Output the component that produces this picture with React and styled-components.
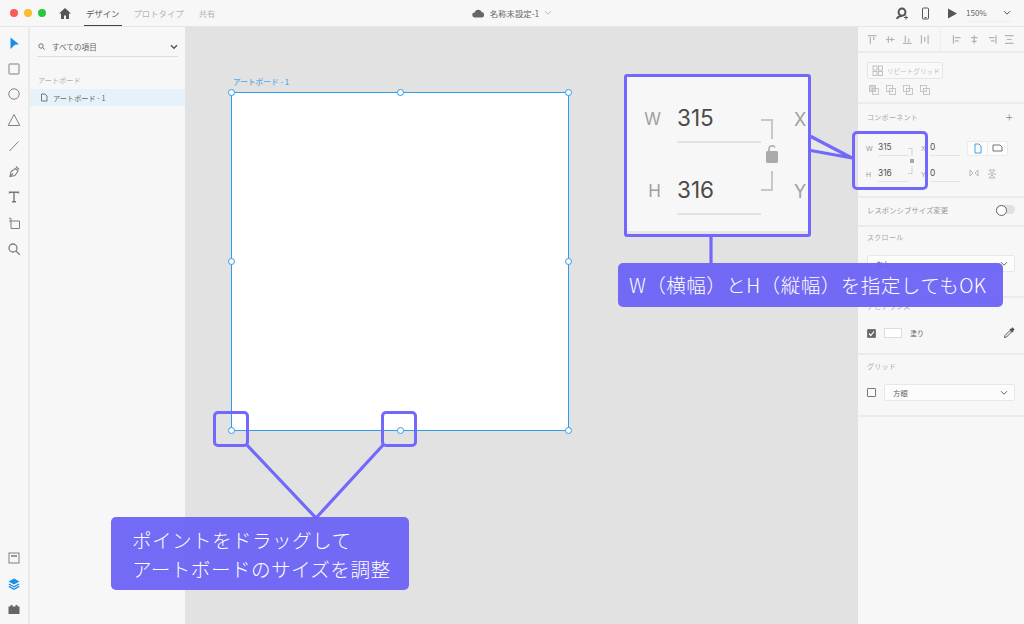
import React from "react";
import styled, { createGlobalStyle } from "styled-components";

const GlobalStyle = createGlobalStyle`
  html, body { margin: 0; padding: 0; }
  body { font-family: "Noto Sans CJK JP", "Noto Sans", sans-serif; color: #555; }
  * { box-sizing: border-box; }
`;

const Page = styled.div`
  position: relative;
  width: 1024px;
  height: 624px;
  overflow: hidden;
  display: flex;
  flex-direction: column;
  background: #f7f7f7;
`;

/* top bar */
const TopBar = styled.header`
  height: 27px;
  flex: none;
  display: grid;
  grid-template-columns: 1fr auto 1fr;
  align-items: center;
  background: #f7f7f7;
  border-bottom: 1px solid #e6e6e6;
`;
const BarLeft = styled.div`
  display: flex;
  align-items: center;
  height: 100%;
  padding-left: 10px;
`;
const Light = styled.span`
  width: 8px;
  height: 8px;
  border-radius: 50%;
  margin-right: 6px;
  background: ${(p) => p.$color};
`;
const HomeIcon = styled.svg`
  margin-left: 6px;
`;
const Tab = styled.span`
  height: 100%;
  display: flex;
  align-items: center;
  padding: 0 2px;
  margin-left: ${(p) => p.$gap}px;
  font-size: 8.4px;
  color: ${(p) => (p.$active ? "#555" : "#b5b5b5")};
  border-bottom: 1px solid ${(p) => (p.$active ? "#444" : "transparent")};
`;
const DocTitle = styled.div`
  display: flex;
  align-items: center;
  gap: 5px;
  font-size: 8.4px;
  color: #666;
`;
const BarRight = styled.div`
  display: flex;
  align-items: center;
  justify-content: flex-end;
  padding-right: 13px;
`;
const BarIcon = styled.svg`
  margin-left: ${(p) => p.$gap || 0}px;
`;
const Zoom = styled.span`
  display: flex;
  width: 45px;
  justify-content: space-between;
  align-items: center;
  margin-left: 9px;
  font-size: 8px;
  color: #666;
  height: 18px;
  border-bottom: 1px solid #eee;
`;

/* main */
const Body = styled.div`
  flex: 1;
  display: flex;
  min-height: 0;
`;
const ToolRail = styled.nav`
  width: 30px;
  flex: none;
  display: flex;
  flex-direction: column;
  align-items: center;
  justify-content: space-between;
  padding: 9px 0 8px;
  background: #f7f7f7;
  border-right: 2px solid #ebebeb;
`;
const ToolGroup = styled.div`
  display: flex;
  flex-direction: column;
  align-items: center;
  gap: ${(p) => p.$gap}px;
`;
const ToolSlot = styled.span`
  width: 16px;
  height: 14px;
  display: flex;
  align-items: center;
  justify-content: center;
`;
const LayersPanel = styled.aside`
  width: 155px;
  flex: none;
  background: #f7f7f7;
  display: flex;
  flex-direction: column;
`;
const SearchRow = styled.div`
  height: 19px;
  margin: 11px 7px 0;
  display: flex;
  align-items: center;
  gap: 7px;
  padding: 0 0 1px 1px;
  font-size: 7.6px;
  color: #666;
  border-bottom: 1px solid #dcdcdc;
`;
const SearchChevron = styled.span`
  margin-left: auto;
  display: flex;
`;
const GroupLabel = styled.div`
  margin: 17px 0 3px 8px;
  height: 12px;
  font-size: 7.2px;
  line-height: 12px;
  color: #b0b0b0;
`;
const LayerRow = styled.div`
  height: 17px;
  display: flex;
  align-items: center;
  gap: 5px;
  padding-left: 10px;
  background: #e5f2fa;
  font-size: 7.2px;
  color: #666;
`;
const Canvas = styled.main`
  position: relative;
  flex: 1;
  background: #e2e2e2;
`;
const ArtboardLabel = styled.div`
  position: absolute;
  left: 48px;
  top: 49px;
  font-size: 7.7px;
  line-height: 12px;
  font-weight: 500;
  color: #5da9e6;
`;
const Artboard = styled.div`
  position: absolute;
  left: 46px;
  top: 65px;
  width: 338px;
  height: 339px;
  background: #fff;
  border: 1px solid #2d9ceb;
`;
const Handle = styled.span`
  position: absolute;
  left: calc(${(p) => p.$x}% + ${(p) => p.$x / 100}px);
  top: calc(${(p) => p.$y}% + ${(p) => p.$y / 100}px);
  width: 7px;
  height: 7px;
  margin: -4px 0 0 -4px;
  border-radius: 50%;
  background: #fff;
  border: 1px solid #2d9ceb;
`;

/* right panel */
const Inspector = styled.aside`
  width: 166px;
  flex: none;
  background: #f7f7f7;
  display: flex;
  flex-direction: column;
`;
const Section = styled.section`
  height: ${(p) => p.$h}px;
  flex: none;
  padding: ${(p) => p.$pad || "0 9px"};
  border-bottom: 2px solid #ebebeb;
`;
const AlignRow = styled.div`
  height: 100%;
  display: flex;
  align-items: center;
  gap: 7px;
  padding-left: 0;
`;
const AlignDivider = styled.span`
  width: 1px;
  height: 100%;
  background: #eee;
  margin: 0 4px 0 3px;
`;
const RepeatButton = styled.div`
  width: 76px;
  height: 17px;
  display: flex;
  align-items: center;
  gap: 4px;
  padding-left: 4px;
  border: 1px solid #e6e6e6;
  border-radius: 2px;
  font-size: 6.6px;
  white-space: nowrap;
  color: #c0c0c0;
  background: #f9f9f9;
`;
const BoolRow = styled.div`
  display: flex;
  gap: 7px;
  margin: 6px 0 0 2px;
`;
const SectionTitle = styled.div`
  font-size: 7px;
  line-height: 10px;
  letter-spacing: 0.3px;
  color: #a8a8a8;
  display: flex;
  justify-content: space-between;
  align-items: center;
`;
const PlusMark = styled.span`
  font-size: 13px;
  line-height: 10px;
  font-weight: 300;
  color: #888;
  margin-right: 2px;
`;
const FieldGrid = styled.div`
  display: grid;
  grid-template-columns: 12px 30px 13px 9px 30px auto;
  grid-template-rows: 26px 26px;
  margin-top: 13px;
  margin-left: -1px;
  align-items: center;
`;
const FieldLabel = styled.span`
  font-size: 7px;
  color: #999;
  font-family: "Liberation Sans", sans-serif;
`;
const FieldValue = styled.span`
  height: 16px;
  font-size: 8.4px;
  line-height: 14px;
  color: #555;
  font-family: "Inter", "Liberation Sans", sans-serif;
  border-bottom: 1px solid #e2e2e2;
`;
const MiniLink = styled.span`
  grid-column: 3;
  grid-row: 1 / span 2;
  display: flex;
  align-items: center;
`;
const PageToggle = styled.div`
  grid-column: 6;
  grid-row: 1;
  display: flex;
  margin-left: 7px;
  width: 41px;
  height: 15px;
  background: #fcfcfc;
  border: 1px solid #ebebeb;
  border-radius: 2px;
`;
const PageCell = styled.span`
  flex: 1;
  display: flex;
  align-items: center;
  justify-content: center;
  & + & { border-left: 1px solid #ebebeb; }
`;
const FlipIcons = styled.div`
  grid-column: 6;
  grid-row: 2;
  display: flex;
  gap: 9px;
  margin-left: 9px;
`;
const SpacedRow = styled.div`
  display: flex;
  align-items: center;
  justify-content: space-between;
  height: 100%;
  padding-bottom: 4px;
  font-size: 7.4px;
  color: #999;
`;
const Toggle = styled.span`
  position: relative;
  width: 19px;
  height: 9px;
  border-radius: 5px;
  background: #e0e0e0;
  &::before {
    content: "";
    position: absolute;
    left: 0;
    top: 0;
    width: 9px;
    height: 9px;
    border-radius: 50%;
    background: #fff;
    border: 1.4px solid #666;
  }
`;
const SelectBox = styled.div`
  height: 17px;
  flex: 1;
  display: flex;
  align-items: center;
  justify-content: space-between;
  padding: 0 6px 0 8px;
  background: #fcfcfc;
  border: 1px solid #e8e8e8;
  border-radius: 2px;
  font-size: 7.4px;
  color: #666;
`;
const ControlRow = styled.div`
  display: flex;
  align-items: center;
  margin-top: ${(p) => p.$top}px;
  gap: 8px;
`;
const CheckBox = styled.span`
  width: 9px;
  height: 9px;
  flex: none;
  border-radius: 1px;
  border: 1px solid #777;
  background: ${(p) => (p.$on ? "#666" : "#fafafa")};
  display: flex;
  align-items: center;
  justify-content: center;
`;
const Swatch = styled.span`
  width: 18px;
  height: 10px;
  background: #fff;
  border: 1px solid #ddd;
`;
const FillLabel = styled.span`
  font-size: 7px;
  color: #666;
  flex: 1;
`;

/* annotations laid over the app */
const Connectors = styled.svg`
  position: absolute;
  left: 0;
  top: 0;
  pointer-events: none;
`;
const FocusBox = styled.div`
  position: absolute;
  left: ${(p) => p.$x}px;
  top: ${(p) => p.$y}px;
  width: ${(p) => p.$w}px;
  height: ${(p) => p.$h}px;
  border: 3.5px solid #7268fb;
  border-radius: 5px;
`;
const Callout = styled.div`
  position: absolute;
  left: ${(p) => p.$x}px;
  top: ${(p) => p.$y}px;
  width: ${(p) => p.$w}px;
  padding: ${(p) => p.$pad};
  background: rgba(108, 98, 246, 0.95);
  border-radius: 5px;
  font-size: 19.6px;
  line-height: 29px;
  letter-spacing: 0.42px;
  font-weight: 300;
  color: #fff;
  white-space: nowrap;
`;
const ZoomCard = styled.div`
  position: absolute;
  left: 624px;
  top: 74px;
  width: 187px;
  height: 163px;
  background: #f7f7f7;
  border: 3px solid #7268fb;
  border-radius: 3px;
  overflow: hidden;
  box-shadow: inset 0 -3px 0 #e6e6e6;
  display: grid;
  grid-template-columns: 33px 84px 33px 1fr;
  grid-template-rows: 72px 72px;
  padding: 6px 0 0 17px;
`;
const ZoomLabel = styled.span`
  align-self: center;
  justify-self: end;
  margin-right: 16px;
  font-size: 17px;
  color: #a0a0a0;
  font-family: "Inter", "Liberation Sans", sans-serif;
`;
const ZoomValue = styled.span`
  height: 60px;
  align-self: start;
  padding-top: 19px;
  font-size: 22.5px;
  line-height: 32px;
  color: #4a4a4a;
  font-family: "Inter", "Liberation Sans", sans-serif;
  border-bottom: 2px solid #e2e2e2;
`;
const LinkCell = styled.div`
  grid-column: 3;
  grid-row: 1 / span 2;
  display: flex;
  align-items: center;
`;
const AxisLabel = styled.span`
  grid-column: 4;
  align-self: center;
  font-size: 18px;
  color: #a0a0a0;
  font-family: "Inter", "Liberation Sans", sans-serif;
`;

const Stroke = ({ w = 14, h = 14, c = "#808080", sw = 1, children, fill = "none" }) => (
  <svg width={w} height={h} viewBox={`0 0 ${w} ${h}`} fill={fill} stroke={c} strokeWidth={sw}>
    {children}
  </svg>
);

const Chevron = ({ c = "#666", w = 1 }) => (
  <svg width="8" height="6" viewBox="0 0 8 6" fill="none" stroke={c} strokeWidth={w}>
    <path d="M1 1.2l3 3 3-3" />
  </svg>
);

const tools = [
  <Stroke><path d="M3.5 1.5L12 8.2 8 8.8 3.5 13z" fill="#1b8fe8" stroke="none" /></Stroke>,
  <Stroke><rect x="2" y="2" width="10" height="10" rx="0.5" /></Stroke>,
  <Stroke><circle cx="7" cy="7" r="5.2" /></Stroke>,
  <Stroke><path d="M7 1.5L12.8 12.5H1.2z" /></Stroke>,
  <Stroke><path d="M2.5 12L11.5 2.5" /></Stroke>,
  <Stroke sw={1.1}><path d="M3 12.5l1-5 4.5-3 2.5 2.5-3 4.5z" /><path d="M3 12.5l3-3M9 2.5l3 3" /></Stroke>,
  <Stroke c="#777" sw={1.4}><path d="M2.5 3.5V2.2h9v1.3M7 2.2v9.6M5 11.8h4" /></Stroke>,
  <Stroke><path d="M4 2.5v10h8.5V5H2M2 2l2 .5" /></Stroke>,
  <Stroke sw={1.3}><circle cx="6" cy="6" r="4" /><path d="M9 9l3.8 3.8" /></Stroke>,
];

const bottomTools = [
  <Stroke><rect x="2" y="2" width="10" height="10" /><path d="M4 5h6" strokeWidth="1.6" /></Stroke>,
  <Stroke>
    <path d="M7 1.5l5.5 3L7 7.5l-5.5-3z" fill="#1b8fe8" stroke="none" />
    <path d="M1.8 7L7 9.8 12.2 7M1.8 9.4L7 12.3l5.2-2.9" stroke="#1b8fe8" strokeWidth="1.4" />
  </Stroke>,
  <Stroke c="none"><path d="M1.5 4.5h2V3h2v1.5h3V3h2v1.5h2V12h-11z" fill="#666" /></Stroke>,
];

const alignIcons = [
  "M1 1.5h9M3.5 3v7M7 3v3",
  "M1 5.5h9M3.5 2v7M7 3.5v4",
  "M1 9.5h9M3.5 1.5V8M7 4.5V8",
  "M1.5 1v9M8.5 1v9M5 3v5",
  "M1.5 1v9M3 3.5h6M3 7h4",
  "M5.5 1v9M2 3.5h7M3 7.5h5",
  "M9.5 1v9M2 3.5h6M4 7h4",
  "M1 1.5h9M1 9.5h9M3 5.5h5",
];

const AlignIcon = ({ d }) => (
  <Stroke w={11} h={11} c="#b4b4b4" sw={1.3}><path d={d} /></Stroke>
);

const BoolIcon = ({ inner }) => (
  <Stroke w={10} h={10} c="#c0c0c0" sw={0.9}>
    <rect x="0.5" y="0.5" width="6" height="6" fill={inner ? "none" : "#d8d8d8"} />
    <rect x="3.5" y="3.5" width="6" height="6" />
  </Stroke>
);

const handles = [
  [0, 0], [50, 0], [100, 0],
  [0, 50], [100, 50],
  [0, 100], [50, 100], [100, 100],
];

const App = () => (
  <Page>
    <GlobalStyle />
    <TopBar>
      <BarLeft>
        <Light $color="#fc5b57" />
        <Light $color="#fdbb2e" />
        <Light $color="#27c83f" />
        <HomeIcon width="14" height="13" viewBox="0 0 14 13" fill="#555">
          <path d="M7 1L1 6.5h2V12h3V8.5h2V12h3V6.5h2z" />
        </HomeIcon>
        <Tab $active $gap={12}>デザイン</Tab>
        <Tab $gap={10}>プロトタイプ</Tab>
        <Tab $gap={11}>共有</Tab>
      </BarLeft>
      <DocTitle>
        <svg width="13" height="9" viewBox="0 0 13 9" fill="#666">
          <path d="M3 8.5a2.5 2.5 0 0 1-.4-5A3.8 3.8 0 0 1 9.7 3a2.8 2.8 0 0 1 .3 5.5z" />
        </svg>
        名称未設定-1
        <Chevron c="#aaa" w={0.8} />
      </DocTitle>
      <BarRight>
        <BarIcon width="13" height="13" viewBox="0 0 13 13" fill="none" stroke="#555" strokeWidth="2">
          <path d="M6 1.5a3.4 3.4 0 0 1 3.4 3.6c0 2-1.3 3.6-3.4 3.6S2.6 7 2.6 5.1A3.4 3.4 0 0 1 6 1.5zM1 12c.5-2 2-3 5-3" />
          <path d="M10 8.5v4M8 10.5h4" strokeWidth="1" />
        </BarIcon>
        <BarIcon $gap={12} width="9" height="13" viewBox="0 0 9 13" fill="none" stroke="#555">
          <rect x="1.5" y="1" width="6" height="11" rx="1" />
          <path d="M3.5 10.5h2" />
        </BarIcon>
        <BarIcon $gap={17} width="10" height="11" viewBox="0 0 10 11" fill="#555">
          <path d="M1 .5l9 5-9 5z" />
        </BarIcon>
        <Zoom>150%<Chevron c="#555" /></Zoom>
      </BarRight>
    </TopBar>
    <Body>
      <ToolRail>
        <ToolGroup $gap={11.7}>
          {tools.map((t, i) => <ToolSlot key={i}>{t}</ToolSlot>)}
        </ToolGroup>
        <ToolGroup $gap={11.5}>
          {bottomTools.map((t, i) => <ToolSlot key={i}>{t}</ToolSlot>)}
        </ToolGroup>
      </ToolRail>
      <LayersPanel>
        <SearchRow>
          <Stroke w={7} h={7} c="#666" sw={0.9}>
            <circle cx="3" cy="3" r="2.2" /><path d="M4.6 4.6l2 2" />
          </Stroke>
          すべての項目
          <SearchChevron><Chevron c="#555" w={1.4} /></SearchChevron>
        </SearchRow>
        <GroupLabel>アートボード</GroupLabel>
        <LayerRow>
          <Stroke w={8} h={9} c="#666" sw={0.9}>
            <path d="M1.5 1h3.5l2 2v5h-5.5z" />
          </Stroke>
          アートボード - 1
        </LayerRow>
      </LayersPanel>
      <Canvas>
        <ArtboardLabel>アートボード - 1</ArtboardLabel>
        <Artboard>
          {handles.map(([x, y]) => <Handle key={`${x}-${y}`} $x={x} $y={y} />)}
        </Artboard>
      </Canvas>
      <Inspector>
        <Section $h={26} $pad="0 9px">
          <AlignRow>
            {alignIcons.slice(0, 4).map((d) => <AlignIcon key={d} d={d} />)}
            <AlignDivider />
            {alignIcons.slice(4).map((d) => <AlignIcon key={d} d={d} />)}
          </AlignRow>
        </Section>
        <Section $h={51} $pad="9px 9px 0">
          <RepeatButton>
            <Stroke w={11} h={11} c="#bbb" sw={0.9}>
              <rect x="1" y="1" width="4" height="4" /><rect x="6.5" y="1" width="4" height="4" />
              <rect x="1" y="6.5" width="4" height="4" /><rect x="6.5" y="6.5" width="4" height="4" />
            </Stroke>
            リピートグリッド
          </RepeatButton>
          <BoolRow>
            <BoolIcon /><BoolIcon inner /><BoolIcon inner /><BoolIcon inner />
          </BoolRow>
        </Section>
        <Section $h={94} $pad="8px 9px 0">
          <SectionTitle>コンポーネント<PlusMark>+</PlusMark></SectionTitle>
          <FieldGrid>
            <FieldLabel>W</FieldLabel>
            <FieldValue>315</FieldValue>
            <MiniLink>
              <svg width="8" height="26" viewBox="0 0 8 26" fill="none" stroke="#c8c8c8" strokeWidth="0.8">
                <path d="M0 .5h4v7M0 25.5h4v-7" />
                <rect x="2" y="11" width="4" height="4" fill="#aaa" stroke="none" />
              </svg>
            </MiniLink>
            <FieldLabel>X</FieldLabel>
            <FieldValue>0</FieldValue>
            <PageToggle>
              <PageCell>
                <Stroke w={8} h={11} c="#2d9ceb" sw={0.9}><path d="M1 1h4l2 2v7H1z" /></Stroke>
              </PageCell>
              <PageCell>
                <Stroke w={11} h={8} c="#666" sw={0.9}><path d="M1 1h7l2 2v4H1z" /></Stroke>
              </PageCell>
            </PageToggle>
            <FieldLabel>H</FieldLabel>
            <FieldValue>316</FieldValue>
            <FieldLabel>Y</FieldLabel>
            <FieldValue>0</FieldValue>
            <FlipIcons>
              <Stroke w={10} h={8} c="#aaa" sw={0.8}><path d="M1 1l3 3-3 3zM9 1L6 4l3 3z" /></Stroke>
              <Stroke w={8} h={10} c="#aaa" sw={0.8}><path d="M1 1l3 3 3-3zM1 9l3-3 3 3zM0 5h8" /></Stroke>
            </FlipIcons>
          </FieldGrid>
        </Section>
        <Section $h={29} $pad="0 9px">
          <SpacedRow>
            レスポンシブサイズ変更
            <Toggle />
          </SpacedRow>
        </Section>
        <Section $h={71} $pad="5px 9px 0">
          <SectionTitle>スクロール</SectionTitle>
          <ControlRow $top={13}>
            <SelectBox>なし<Chevron /></SelectBox>
          </ControlRow>
        </Section>
        <Section $h={57} $pad="3px 9px 0">
          <SectionTitle>アピアランス</SectionTitle>
          <ControlRow $top={16}>
            <CheckBox $on>
              <svg width="7" height="7" viewBox="0 0 7 7" fill="none" stroke="#fff" strokeWidth="1.2">
                <path d="M1 3.5l1.8 2L6 1.5" />
              </svg>
            </CheckBox>
            <Swatch />
            <FillLabel>塗り</FillLabel>
            <Stroke w={12} h={12} c="#555" sw={1}>
              <path d="M1.5 10.5l.5-2 5-5 1.5 1.5-5 5z" />
              <path d="M7 2l3 3M8.5 2.5l1-1 1 1-1 1" strokeWidth="1.6" />
            </Stroke>
          </ControlRow>
        </Section>
        <Section $h={62} $pad="6px 9px 0">
          <SectionTitle>グリッド</SectionTitle>
          <ControlRow $top={13}>
            <CheckBox />
            <SelectBox>方眼<Chevron /></SelectBox>
          </ControlRow>
        </Section>
      </Inspector>
    </Body>

    <Connectors width="1024" height="624" viewBox="0 0 1024 624" fill="none" stroke="#7268fb" strokeWidth="3.2">
      <path d="M246 444L316 518L384 444" />
      <path d="M711 236V263" />
      <path d="M808 135L852 158L808 150" fill="#e8e8e8" />
    </Connectors>
    <FocusBox $x={213} $y={411} $w={36} $h={36} />
    <FocusBox $x={381} $y={411} $w={36} $h={36} />
    <FocusBox $x={852} $y={131} $w={76} $h={59} />
    <ZoomCard>
      <ZoomLabel>W</ZoomLabel>
      <ZoomValue>315</ZoomValue>
      <LinkCell>
        <svg width="22" height="72" viewBox="0 0 22 72" fill="none" stroke="#c8c8c8" strokeWidth="2">
          <path d="M0 1h11v19M0 71h11V52" />
          <path d="M8 32.5v-3a3.2 3.2 0 0 1 6 -1" stroke="#aaa" strokeWidth="1.6" />
          <rect x="5" y="32" width="12" height="12" rx="1.5" fill="#aaa" stroke="none" />
        </svg>
      </LinkCell>
      <AxisLabel>X</AxisLabel>
      <ZoomLabel>H</ZoomLabel>
      <ZoomValue>316</ZoomValue>
      <AxisLabel>Y</AxisLabel>
    </ZoomCard>
    <Callout $x={618} $y={263} $w={385} $pad="7px 0 8px 11px">W（横幅）とH（縦幅）を指定してもOK</Callout>
    <Callout $x={111} $y={517} $w={298} $pad="8px 0 7px 21px">
      ポイントをドラッグして<br />アートボードのサイズを調整
    </Callout>
  </Page>
);

export default App;
